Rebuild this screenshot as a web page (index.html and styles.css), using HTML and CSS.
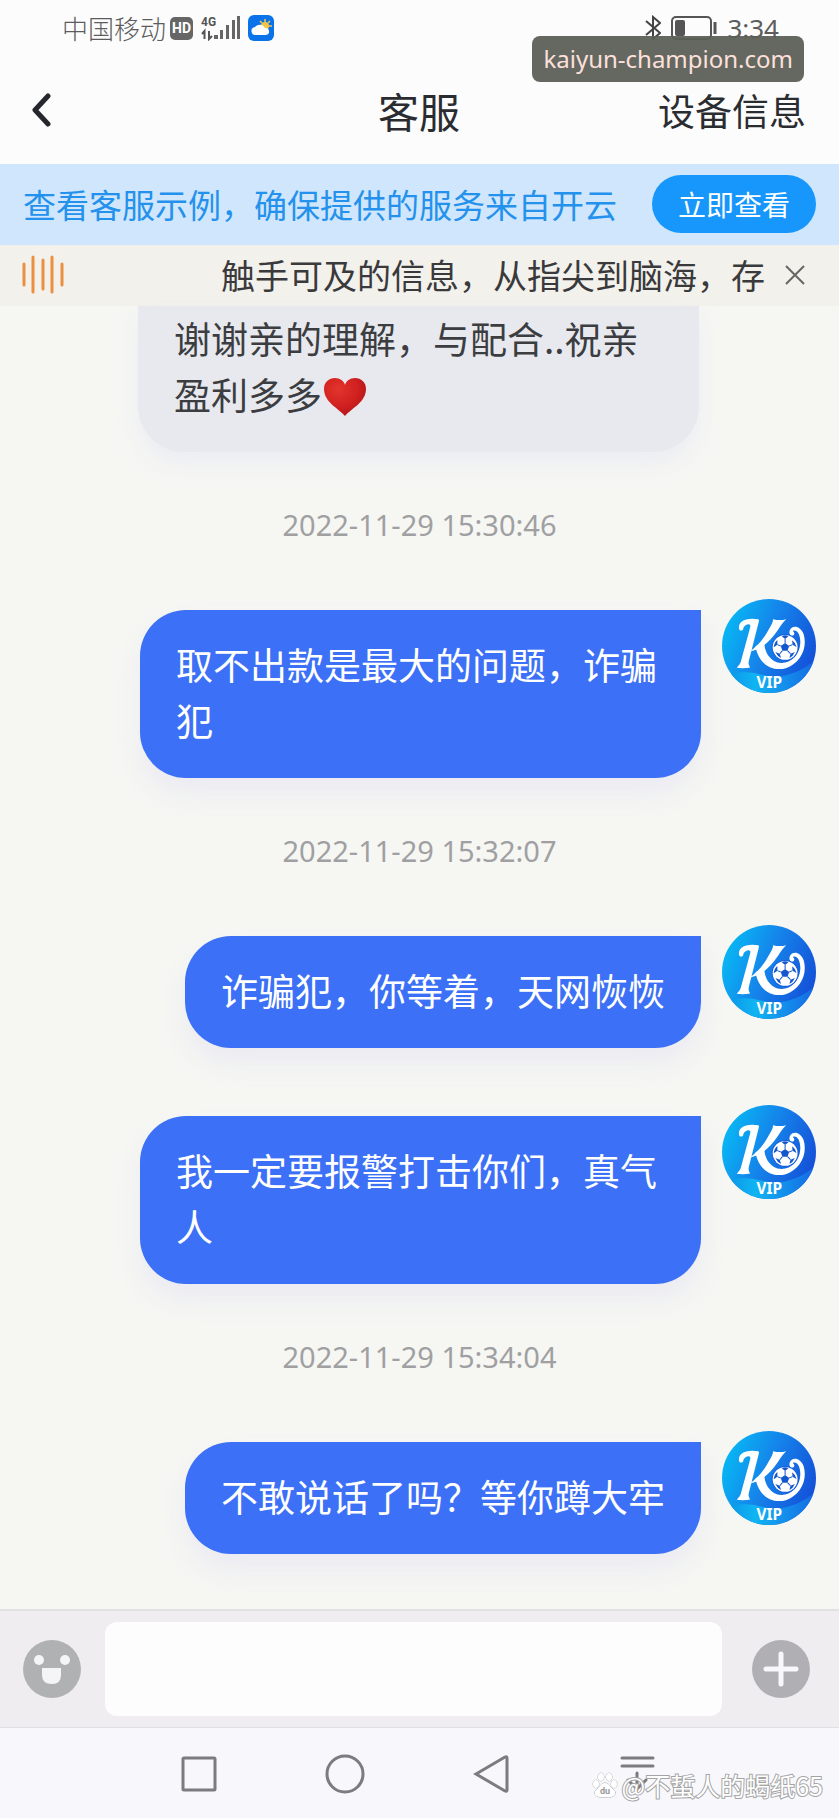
FILE: index.html
```html
<!DOCTYPE html>
<html lang="zh-CN">
<head>
<meta charset="utf-8">
<meta name="viewport" content="width=device-width, initial-scale=1">
<title>客服</title>
<link rel="stylesheet" href="styles.css">
</head>
<body>
<svg class="defs" aria-hidden="true">
  <defs>
    <linearGradient id="disc" x1="0" y1="0.2" x2="1" y2="0.6">
      <stop offset="0" stop-color="#06bdf5"/>
      <stop offset="0.5" stop-color="#1583ea"/>
      <stop offset="1" stop-color="#1450d8"/>
    </linearGradient>
    <linearGradient id="band" x1="0" y1="0" x2="1" y2="0">
      <stop offset="0" stop-color="#0b8fe6"/>
      <stop offset="0.35" stop-color="#10b4f2"/>
      <stop offset="1" stop-color="#1668e4"/>
    </linearGradient>
    <clipPath id="round"><circle cx="140" cy="140" r="140"/></clipPath>
    <symbol id="avatar" viewBox="0 0 280 280">
      <g clip-path="url(#round)">
        <rect width="280" height="280" fill="url(#disc)"/>
        <path d="M0 228Q60 208 120 226Q200 246 280 180V280H0Z" fill="url(#band)"/>
      </g>
      <path d="M51 90C46 66 72 54 108 60C111 62 110 66 109 70L80 184C78 193 80 198 84 204C70 207 56 207 44 205C49 198 53 196 56 187L84 84C86 77 82 74 75 76C68 78 64 83 63 90C61 95 53 95 51 90Z" fill="#fff"/>
      <path d="M152 60Q172 65 191 60C182 70 176 76 168 90Q140 132 108 149L80 158Q110 138 131 105L143 84C149 74 152 68 152 60Z" fill="#fff"/>
      <path d="M100 141L126 128C126 158 141 180 165 189C202 197 231 167 233 133C235 108 224 90 211 95C217 100 217 106 211 109C202 111 197 99 204 89C215 76 235 83 243 104C256 146 233 192 190 206C150 217 108 194 100 141Z" fill="#fff"/>
      <circle cx="188" cy="144" r="40" fill="#1963dc"/>
      <circle cx="188" cy="144" r="37" fill="#fff"/>
      <g fill="#1456cc">
        <path d="M188 131L200 140L195 154H180L175 140Z"/>
        <path d="M178 111Q188 105 198 111L188 119Z"/>
        <path d="M209 123Q219 130 222 143L210 136Z"/>
        <path d="M217 158Q212 170 201 176L204 163Z"/>
        <path d="M176 176Q165 171 159 158L172 163Z"/>
        <path d="M154 144Q155 130 165 122L165 136Z"/>
      </g>
      <path d="M188 131V119M200 140L210 136M195 154L204 163M180 154L172 163M175 140L165 136" stroke="#1456cc" stroke-width="3"/>
      <text class="vip" x="141" y="264" text-anchor="middle">VIP</text>
    </symbol>
  </defs>
</svg>

<div class="status">
  <span class="carrier">中国移动</span>
  <span class="hd">HD</span>
  <svg class="signal" viewBox="0 0 40 26" aria-hidden="true">
    <text class="net" x="0" y="11">4G</text>
    <path d="M3.500 24V16L1 19M8 16V24L11 21" fill="none" stroke="#555" stroke-width="2"/>
    <g fill="#666"><rect x="13" y="20" width="4" height="4"/><rect x="19" y="15" width="3" height="9"/><rect x="25" y="10" width="3" height="14"/><rect x="31" y="5" width="3" height="19"/><rect x="36" y="1" width="3" height="23"/></g>
  </svg>
  <svg class="weather" viewBox="0 0 26 26" aria-hidden="true">
    <rect width="26" height="26" rx="6" fill="#0a73ea"/>
    <path d="M17 4V7M22 6L20 8M24 11H21M12 6L14 8" stroke="#f7c64b" stroke-width="1.500"/>
    <circle cx="17" cy="11" r="4" fill="#f9c544"/>
    <path d="M8 20A4 4 0 0 1 7 12A6 6 0 0 1 17 13A3.500 3.500 0 0 1 18 20Z" fill="#fff"/>
  </svg>
  <span class="spacer"></span>
  <svg class="bluetooth" viewBox="0 0 16 26" fill="none" stroke="#444" stroke-width="2" aria-hidden="true"><path d="M1 6L15 18L8 24V2L15 8L1 20"/></svg>
  <svg class="battery" viewBox="0 0 46 26" aria-hidden="true"><rect x="1" y="2" width="39" height="22" rx="4" fill="none" stroke="#555" stroke-width="2"/><rect x="4" y="5" width="10" height="16" rx="2" fill="#555"/><path d="M44 7V19" stroke="#555" stroke-width="3"/></svg>
  <time class="clock">3:34</time>
  <div class="site">kaiyun-champion.com</div>
</div>

<header class="header">
  <button class="back" aria-label="返回"><svg viewBox="0 0 20 34" fill="none" stroke="#26272c" stroke-width="5" stroke-linecap="round" stroke-linejoin="round"><path d="M16 3L3 17L16 31"/></svg></button>
  <h1 class="title">客服</h1>
  <a class="device" href="#">设备信息</a>
</header>

<section class="banner">
  <p class="banner-text">查看客服示例，确保提供的服务来自开云</p>
  <button class="view">立即查看</button>
</section>

<section class="notice">
  <svg class="wave" viewBox="0 0 42 40" stroke="#eb9040" stroke-width="3" stroke-linecap="round" aria-hidden="true"><path d="M2 9V30M11 2V37M21 5V34M30 2V37M40 9V30"/></svg>
  <p class="notice-text">触手可及的信息，从指尖到脑海，存</p>
  <button class="close" aria-label="关闭"><svg viewBox="0 0 20 20" stroke="#666" stroke-width="2"><path d="M1 1L19 19M19 1L1 19"/></svg></button>
</section>

<main class="chat">
  <div class="bubble received">谢谢亲的理解，与配合..祝亲盈利多多<svg class="heart" viewBox="0 0 42 38" role="img" aria-label="红心"><defs><radialGradient id="red" cx="0.35" cy="0.3" r="0.8"><stop offset="0" stop-color="#e3342c"/><stop offset="0.6" stop-color="#cf1f1f"/><stop offset="1" stop-color="#a81518"/></radialGradient></defs><path d="M21 38C14 30 0 24 0 11C0 4 5 0 11 0C16 0 20 3 21 7C22 3 26 0 31 0C37 0 42 4 42 11C42 24 28 30 21 38Z" fill="url(#red)"/></svg></div>

  <time class="stamp">2022-11-29 15:30:46</time>
  <div class="row">
    <div class="bubble sent">取不出款是最大的问题，诈骗犯</div>
    <svg class="avatar" role="img" aria-label="VIP"><use href="#avatar"/></svg>
  </div>

  <time class="stamp">2022-11-29 15:32:07</time>
  <div class="row">
    <div class="bubble sent">诈骗犯，你等着，天网恢恢</div>
    <svg class="avatar" role="img" aria-label="VIP"><use href="#avatar"/></svg>
  </div>
  <div class="row">
    <div class="bubble sent">我一定要报警打击你们，真气人</div>
    <svg class="avatar" role="img" aria-label="VIP"><use href="#avatar"/></svg>
  </div>

  <time class="stamp">2022-11-29 15:34:04</time>
  <div class="row">
    <div class="bubble sent">不敢说话了吗？等你蹲大牢</div>
    <svg class="avatar" role="img" aria-label="VIP"><use href="#avatar"/></svg>
  </div>
</main>

<form class="composer">
  <button class="tool" type="button" aria-label="表情"><svg viewBox="0 0 58 58"><circle cx="29" cy="29" r="29" fill="#b0b1b3"/><circle cx="16" cy="20" r="5" fill="#f5f5f7"/><circle cx="42" cy="20" r="5" fill="#f5f5f7"/><path d="M19 28H38V35Q38 44 29 44Q19 44 19 35Z" fill="#f5f5f7"/></svg></button>
  <input class="message" type="text" aria-label="消息">
  <button class="tool" type="button" aria-label="更多"><svg viewBox="0 0 58 58"><circle cx="29" cy="29" r="29" fill="#b0afb3"/><path d="M29 14V44M14 29H44" stroke="#f8f8fa" stroke-width="5" stroke-linecap="round"/></svg></button>
</form>

<nav class="nav">
  <button class="key" aria-label="最近任务"><svg viewBox="0 0 40 40"><rect x="4" y="4" width="32" height="32" rx="1"/></svg></button>
  <button class="key" aria-label="主页"><svg viewBox="0 0 40 40"><circle cx="20" cy="20" r="18"/></svg></button>
  <button class="key" aria-label="后退"><svg viewBox="0 0 40 40"><path d="M5 20L34 3Q36 2 36 4V36Q36 38 34 37Z"/></svg></button>
  <button class="key" aria-label="收起"><svg viewBox="0 0 40 40"><path d="M5 4H36M5 12H36M20 19V35M11 26L20 35L29 26"/></svg></button>
  <div class="credit">
    <svg class="paw" viewBox="0 0 26 26" aria-hidden="true"><g fill="#fff" stroke="#aaa" stroke-width="1"><ellipse cx="4" cy="12" rx="3" ry="4"/><ellipse cx="9" cy="5" rx="3" ry="4"/><ellipse cx="17" cy="5" rx="3" ry="4"/><ellipse cx="22" cy="12" rx="3" ry="4"/><path d="M13 11C9 11 8 15 5 17C1 20 3 25 8 25H18C23 25 25 20 21 17C18 15 17 11 13 11Z"/></g><text class="du" x="13" y="22" text-anchor="middle">du</text></svg>
    <span>@不蜇人的蝎纸65</span>
  </div>
</nav>
</body>
</html>
```
FILE: styles.css
```css
* {
  box-sizing: border-box;
}

body {
  margin: 0;
  min-height: 100vh;
  display: flex;
  flex-direction: column;
  background: #fcfcfd;
  color: #2b2c30;
  font-family: "Noto Sans CJK SC", sans-serif;
}

button {
  padding: 0;
  border: 0;
  background: none;
  font: inherit;
  color: inherit;
}

svg {
  display: block;
  flex: none;
}

h1,
p {
  margin: 0;
  font-weight: 400;
}

.defs {
  position: absolute;
  width: 0;
  height: 0;
}

.vip {
  fill: #fff;
  font: 700 46px "Noto Sans", sans-serif;
}

/* Status bar */
.status {
  position: relative;
  display: flex;
  align-items: center;
  height: 56px;
  padding: 0 60px 0 62px;
  color: #5c5c5c;
}

.carrier {
  font-size: 26px;
  font-weight: 300;
  line-height: 36px;
}

.hd {
  width: 23px;
  margin: 0 8px 0 4px;
  border-radius: 5px;
  background: #666;
  color: #fff;
  font: 700 14px/23px Roboto, sans-serif;
  text-align: center;
}

.signal {
  width: 40px;
  height: 26px;
}

.net {
  fill: #555;
  font: 700 12px Roboto, sans-serif;
}

.weather {
  width: 26px;
  height: 26px;
  margin-left: 7px;
}

.spacer {
  flex: 1;
}

.bluetooth {
  width: 16px;
  height: 26px;
  margin-right: 10px;
}

.battery {
  width: 46px;
  height: 26px;
  margin-right: 10px;
}

.clock {
  font: 400 26px/26px "Noto Sans", sans-serif;
}

.site {
  position: absolute;
  top: 36px;
  right: 35px;
  padding: 0 11px;
  border-radius: 8px;
  background: rgba(91, 95, 86, 0.94);
  color: #fde0dc;
  font: 400 24px/46px "Noto Sans", sans-serif;
}

/* Header */
.header {
  display: grid;
  grid-template-columns: 1fr auto 1fr;
  align-items: center;
  height: 108px;
  padding: 0 33px 0 32px;
}

.back {
  justify-self: start;
}

.back svg {
  width: 20px;
  height: 34px;
}

.title {
  font-size: 41px;
  line-height: 56px;
}

.device {
  justify-self: end;
  color: inherit;
  font-size: 37px;
  line-height: 56px;
  text-decoration: none;
}

/* Banner */
.banner {
  display: flex;
  align-items: center;
  justify-content: space-between;
  height: 81px;
  padding: 0 23px 2px;
  background: #cfe6fc;
}

.banner-text {
  color: #2492ec;
  font-size: 33px;
  line-height: 48px;
  white-space: nowrap;
}

.view {
  width: 164px;
  height: 58px;
  border-radius: 29px;
  background: #1796fb;
  color: #fff;
  font-size: 28px;
  line-height: 40px;
}

/* Scrolling notice */
.notice {
  display: flex;
  align-items: center;
  height: 61px;
  padding: 0 34px 2px 22px;
  background: #f3f1eb;
}

.wave {
  width: 42px;
  height: 40px;
}

.notice-text {
  flex: 1;
  color: #3a3a3c;
  font-size: 34px;
  line-height: 48px;
  text-align: right;
  white-space: nowrap;
}

.close {
  margin-left: 20px;
}

.close svg {
  width: 20px;
  height: 20px;
}

/* Conversation */
.chat {
  flex: 1;
  display: flex;
  flex-direction: column;
  gap: 57px;
  padding: 0 23px 55px;
  background: #f6f7f3;
}

.bubble {
  max-width: 561px;
  padding: 26px 36px 30px;
  font-size: 37px;
  line-height: 56px;
}

.received {
  align-self: flex-start;
  margin-left: 115px;
  padding-top: 4px;
  border-radius: 0 0 46px 46px;
  background: #e8e9ee;
  box-shadow: 0 12px 20px rgba(232, 232, 244, 0.7);
  color: #3c3d41;
}

.heart {
  display: inline-block;
  width: 42px;
  height: 38px;
  margin-left: 2px;
  vertical-align: -6px;
}

.stamp {
  align-self: center;
  color: #a0a0a2;
  font: 400 29px/32px "Noto Sans", sans-serif;
  padding-bottom: 1px;
}

.row {
  display: flex;
  align-items: flex-start;
  justify-content: flex-end;
  gap: 21px;
}

.sent {
  margin-top: 11px;
  border-radius: 46px 0 46px 46px;
  background: #3c70f6;
  box-shadow: 0 16px 24px rgba(228, 226, 242, 0.6);
  color: #fff;
}

.avatar {
  width: 94px;
  height: 94px;
}

/* Composer */
.composer {
  display: flex;
  align-items: center;
  gap: 24px;
  height: 119px;
  padding: 0 29px 0 23px;
  border-top: 2px solid #e0e2e1;
  border-bottom: 1px solid #e0e0e4;
  background: #f0edf1;
}

.tool svg {
  width: 58px;
  height: 58px;
}

.message {
  flex: 1;
  min-width: 0;
  height: 94px;
  margin-right: 6px;
  padding: 0 24px;
  border: 0;
  border-radius: 12px;
  background: #fdfdfd;
  font: inherit;
  font-size: 34px;
}

/* System navigation */
.nav {
  position: relative;
  display: flex;
  align-items: center;
  justify-content: center;
  gap: 106px;
  height: 91px;
  padding-right: 4px;
  background: #f7f7fc;
}

.key svg {
  width: 40px;
  height: 40px;
  fill: none;
  stroke: #7c7c7e;
  stroke-width: 3;
  stroke-linecap: round;
}

.credit {
  position: absolute;
  right: 16px;
  bottom: 16px;
  display: flex;
  align-items: center;
  gap: 4px;
  color: #fff;
  font-size: 25px;
  line-height: 36px;
  -webkit-text-stroke: 2px #a4a4a4;
  paint-order: stroke fill;
}

.paw {
  width: 26px;
  height: 26px;
}

.du {
  fill: #999;
  font: 700 9px Roboto, sans-serif;
  -webkit-text-stroke: 0;
}
```
